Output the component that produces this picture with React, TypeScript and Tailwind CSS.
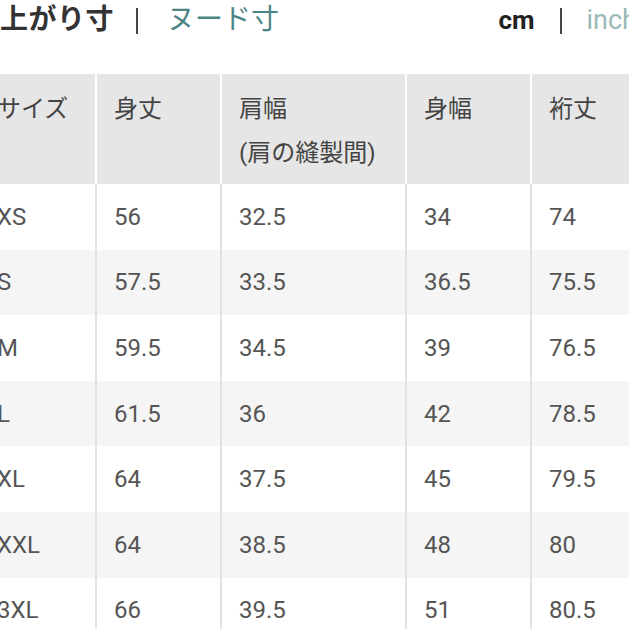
import React from "react";

const rows: [string, string, string, string, string][] = [
  ["XS", "56", "32.5", "34", "74"],
  ["S", "57.5", "33.5", "36.5", "75.5"],
  ["M", "59.5", "34.5", "39", "76.5"],
  ["L", "61.5", "36", "42", "78.5"],
  ["XL", "64", "37.5", "45", "79.5"],
  ["XXL", "64", "38.5", "48", "80"],
  ["3XL", "66", "39.5", "51", "80.5"],
];

const cols = "grid grid-cols-[115px_123px_183px_123px_123px] gap-x-[2px]";

export default function App() {
  return (
    <div
      className="w-[629px] h-[629px] overflow-hidden bg-white"
      style={{ fontFamily: '"Roboto", "Noto Sans CJK JP", sans-serif' }}
    >
      <div className="h-[74px] flex items-start pt-[2px] text-[28px] leading-[36px]">
        <span className="font-semibold text-[#333] tracking-[0.5px]">上がり寸</span>
        <span className="ml-[22px] w-[2px] h-[26px] mt-[6px] bg-[#444]" />
        <span className="ml-[29px] text-[#4c8586]">ヌード寸</span>
        <span className="ml-auto font-bold text-[#222] text-[26px]">cm</span>
        <span className="ml-[25px] w-[2px] h-[26px] mt-[6px] bg-[#444]" />
        <span className="ml-[25px] text-[#9ab9b9] text-[27px] whitespace-nowrap mr-[-8px]">inch</span>
      </div>
      <div className="ml-[-20px] w-[710px]">
        <div className={`${cols} bg-white h-[110px]`}>
          {["サイズ", "身丈", "肩幅\n(肩の縫製間)", "身幅", "裄丈"].map((h, i) => (
            <div
              key={i}
              className="bg-[#e6e6e6] px-[17px] pt-[13px] text-[24px] leading-[44px] text-[#444] whitespace-pre-line"
            >
              {h}
            </div>
          ))}
        </div>
        {rows.map((r, ri) => (
          <div key={ri} className={`${cols} bg-[#e2e2e2] h-[65.6px]`}>
            {r.map((c, ci) => (
              <div
                key={ci}
                className={`${ri % 2 === 1 ? "bg-[#f5f5f5]" : "bg-white"} flex items-center px-[17px] text-[24px] text-[#555]`}
              >
                {c}
              </div>
            ))}
          </div>
        ))}
      </div>
    </div>
  );
}
